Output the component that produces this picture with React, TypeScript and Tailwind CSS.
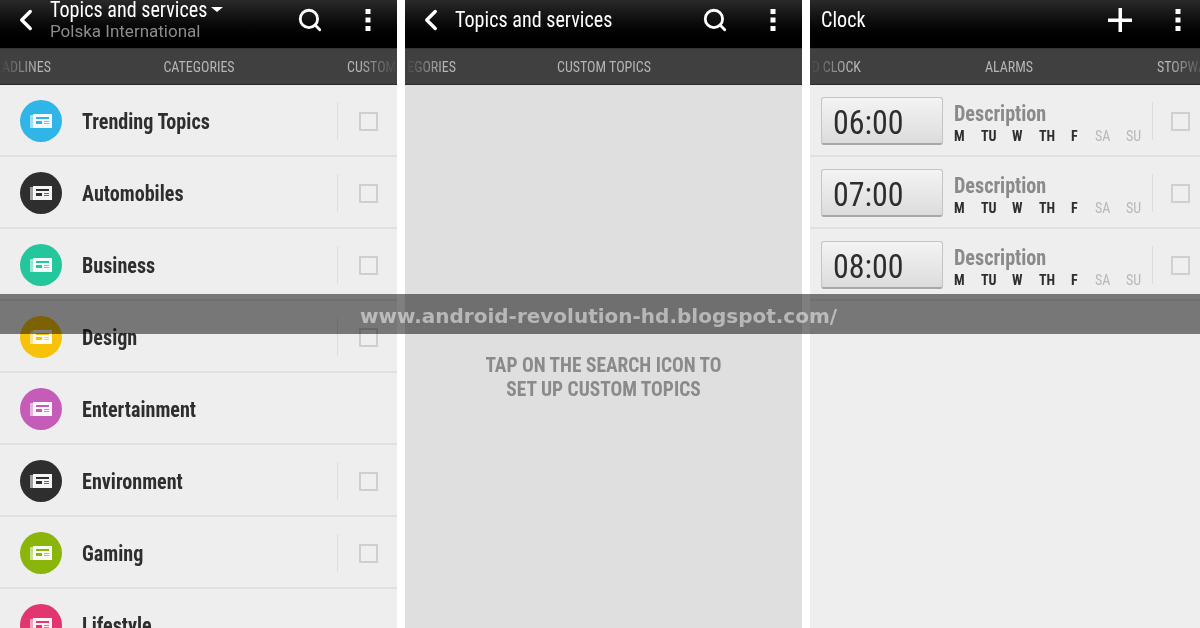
import { ChevronLeft, Search } from 'lucide-react';

const condensed = "font-['Roboto',sans-serif] font-stretch-condensed";

const topics = [
  { name: 'Trending Topics', color: 'bg-[#2fb5e8]', hex: '#2fb5e8', check: true },
  { name: 'Automobiles', color: 'bg-[#2e2e2e]', hex: '#2e2e2e', check: true },
  { name: 'Business', color: 'bg-[#24c69c]', hex: '#24c69c', check: true },
  { name: 'Design', color: 'bg-[#f8c20a]', hex: '#f8c20a', check: true },
  { name: 'Entertainment', color: 'bg-[#c55cb8]', hex: '#c55cb8', check: false },
  { name: 'Environment', color: 'bg-[#2e2e2e]', hex: '#2e2e2e', check: true },
  { name: 'Gaming', color: 'bg-[#8ab50a]', hex: '#8ab50a', check: true },
  { name: 'Lifestyle', color: 'bg-[#e23670]', hex: '#e23670', check: false },
];

const days = [
  { label: 'M', w: 'w-[27px]', on: true },
  { label: 'TU', w: 'w-[31px]', on: true },
  { label: 'W', w: 'w-[27px]', on: true },
  { label: 'TH', w: 'w-[32px]', on: true },
  { label: 'F', w: 'w-[24px]', on: true },
  { label: 'SA', w: 'w-[31px]', on: false },
  { label: 'SU', w: 'w-[20px]', on: false },
];

function Dots() {
  return (
    <svg width="6" height="22" viewBox="0 0 6 22" fill="white">
      <rect x="0.5" y="0" width="5" height="5" />
      <rect x="0.5" y="8.5" width="5" height="5" />
      <rect x="0.5" y="17" width="5" height="5" />
    </svg>
  );
}

function PlusIcon() {
  return (
    <svg width="24" height="24" viewBox="0 0 24 24" fill="white">
      <rect x="10.5" y="0" width="3.5" height="24" />
      <rect x="0" y="10.5" width="24" height="3.5" />
    </svg>
  );
}

function NewsIcon({ fill }: { fill: string }) {
  return (
    <svg width="22" height="14" viewBox="0 0 22 14" fill="none">
      <rect x="0" y="1" width="4" height="13" fill="white" opacity="0.55" />
      <rect x="3" y="0" width="19" height="14" fill="white" opacity="0.95" />
      <rect x="6" y="3" width="13" height="2" fill={fill} />
      <rect x="6" y="7" width="6" height="3" fill={fill} />
      <rect x="14" y="7" width="5" height="1" fill={fill} opacity="0.7" />
      <rect x="14" y="9" width="5" height="1" fill={fill} opacity="0.7" />
    </svg>
  );
}

function Checkbox() {
  return <div className="w-[19px] h-[19px] border-2 border-[#cfcfcf] bg-[#efefef]" />;
}

function Header({ children }: { children: React.ReactNode }) {
  return (
    <div className="h-12 shrink-0 pb-[9px] flex items-center bg-gradient-to-b from-[#2a2a2a] to-[#000000] text-white">
      {children}
    </div>
  );
}

function Tabs({ left, center, right }: { left: string; center: string; right?: string }) {
  return (
    <div className={`${condensed} relative h-[37px] shrink-0 pt-[2px] grid grid-cols-[51px_1fr_50px] items-center bg-[#404040] border-t border-[#333333] border-b border-b-[#2a2a2a] text-[14px] text-[#b5b5b5] overflow-hidden`}>
      <div className="flex justify-end whitespace-nowrap overflow-hidden">{left}</div>
      <div className="text-center">{center}</div>
      <div className="whitespace-nowrap overflow-hidden">{right}</div>
      <div className="absolute left-0 top-0 bottom-0 w-[38px] bg-gradient-to-r from-[#404040] to-transparent" />
      <div className="absolute right-0 top-0 bottom-0 w-[38px] bg-gradient-to-l from-[#404040] to-transparent" />
    </div>
  );
}

function TopicRow({ name, color, hex, check }: { name: string; color: string; hex: string; check: boolean }) {
  return (
    <div className="h-[72px] shrink-0 flex items-center border-b-2 border-[#e0e0e0] pt-[2px] pl-5">
      <div className={`w-[42px] h-[42px] rounded-full flex items-center justify-center ${color}`}>
        <NewsIcon fill={hex} />
      </div>
      <div className={`${condensed} ml-5 flex-1 text-[22px] font-bold text-[#2e2e2e] scale-x-[0.915] origin-left`}>{name}</div>
      {check && (
        <div className="flex items-center h-[38px] border-l border-[#dcdcdc] pl-[21px] pr-[19px]">
          <Checkbox />
        </div>
      )}
    </div>
  );
}

function AlarmRow({ time }: { time: string }) {
  return (
    <div className="h-[72px] shrink-0 flex items-center border-b-2 border-[#e0e0e0] pt-[2px] pl-[11px]">
      <div className={`${condensed} w-[122px] h-12 pl-[11px] pt-[3px] rounded-[3px] border border-[#c4c4c4] border-b-2 border-b-[#a8a8a8] bg-gradient-to-b from-[#f4f4f4] to-[#dcdcdc] flex items-center text-[#2e2e2e]`}>
        <span className="text-[34px] scale-x-[0.94] origin-left">{time}</span>
      </div>
      <div className={`${condensed} ml-[11px] w-[198px]`}>
        <div className="mt-[2px] text-[22px] leading-[26px] font-bold text-[#8a8a8a] scale-x-[0.915] origin-left">Description</div>
        <div className="flex mt-[1px] text-[14px] leading-[16px] font-bold">
          {days.map(d => (
            <span key={d.label} className={`${d.w} ${d.on ? 'text-[#2e2e2e]' : 'text-[#b8b8b8] font-normal'}`}>
              {d.label}
            </span>
          ))}
        </div>
      </div>
      <div className="flex items-center h-[38px] border-l border-[#dcdcdc] pl-[18px]">
        <Checkbox />
      </div>
    </div>
  );
}

export default function App() {
  return (
    <div className="relative w-[1200px] h-[628px] overflow-hidden bg-white flex gap-2 blur-[0.4px]">
      {/* Categories */}
      <div className="w-[397px] shrink-0 h-full flex flex-col bg-[#eeeeee] overflow-hidden">
        <Header>
          <ChevronLeft className="ml-[9px] w-[34px] h-[34px] shrink-0" strokeWidth={2.4} />
          <div className={`${condensed} ml-[7px] flex-1`}>
            <div className="-mt-[1px] flex items-center text-[22px] leading-[26px]">
              <span className="w-[156px] whitespace-nowrap scale-x-[0.915] origin-left">Topics and services</span>
              <span className="ml-[5px] mt-[-2px] w-0 h-0 border-x-[6px] border-x-transparent border-t-[5px] border-t-white" />
            </div>
            <div className="-mt-[2px] font-['Roboto',sans-serif] font-stretch-normal text-[17px] leading-[20px] text-[#8c8c8c]">Polska International</div>
          </div>
          <Search className="w-[26px] h-[26px] mr-[42px]" strokeWidth={2.6} />
          <div className="mr-[26px]"><Dots /></div>
        </Header>
        <Tabs left="HEADLINES" center="CATEGORIES" right="CUSTOM TOPICS" />
        {topics.map(t => (
          <TopicRow key={t.name} name={t.name} color={t.color} hex={t.hex} check={t.check} />
        ))}
      </div>

      {/* Custom topics */}
      <div className="w-[397px] shrink-0 h-full flex flex-col bg-[#dfdfdf]">
        <Header>
          <ChevronLeft className="ml-[9px] w-[34px] h-[34px] shrink-0" strokeWidth={2.4} />
          <div className={`${condensed} ml-[7px] flex-1 text-[22px] whitespace-nowrap scale-x-[0.915] origin-left`}>Topics and services</div>
          <Search className="w-[26px] h-[26px] mr-[42px]" strokeWidth={2.6} />
          <div className="mr-[26px]"><Dots /></div>
        </Header>
        <Tabs left="CATEGORIES" center="CUSTOM TOPICS" />
        <div className={`${condensed} mt-[268px] text-center text-[21px] leading-[24px] font-bold text-[#8a8a8a] scale-x-[0.925]`}>
          TAP ON THE SEARCH ICON TO
          <br />
          SET UP CUSTOM TOPICS
        </div>
      </div>

      {/* Clock */}
      <div className="w-[397px] shrink-0 h-full flex flex-col bg-[#eeeeee]">
        <Header>
          <div className={`${condensed} ml-[11px] flex-1 text-[22px] scale-x-[0.915] origin-left`}>Clock</div>
          <div className="mr-[43px]"><PlusIcon /></div>
          <div className="mr-[26px]"><Dots /></div>
        </Header>
        <Tabs left="WORLD CLOCK" center="ALARMS" right="STOPWATCH" />
        {['06:00', '07:00', '08:00'].map(t => (
          <AlarmRow key={t} time={t} />
        ))}
      </div>

      {/* Watermark band */}
      <div className="absolute left-0 right-0 top-[294px] h-10 pt-[3px] bg-black/50 flex items-center pl-[360px]">
        <span className="font-['DejaVu_Sans',sans-serif] font-bold text-[20px] text-white/50 whitespace-nowrap">
          www.android-revolution-hd.blogspot.com/
        </span>
      </div>
    </div>
  );
}
